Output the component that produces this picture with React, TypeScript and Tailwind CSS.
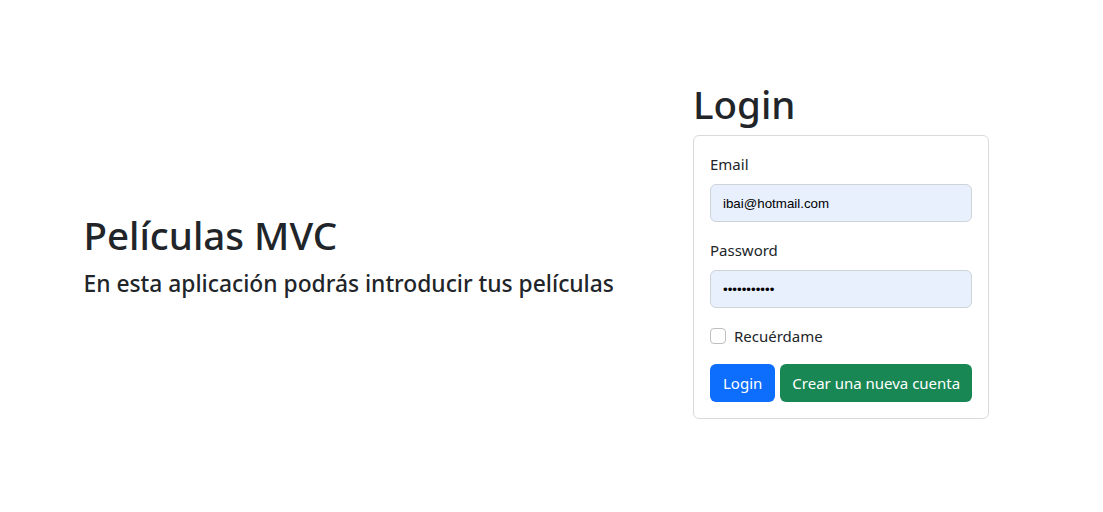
export default function App() {
  return (
    <div
      className="min-h-screen bg-white text-[#212529] pt-[81px]"
      style={{ fontFamily: '"Noto Sans", "Open Sans", sans-serif' }}
    >
      <div className="mx-auto flex w-[960px] items-center px-3">
        <div className="w-[609.5px] shrink-0 pt-[17px]">
          <h1 className="mb-[11px] text-[38.5px] font-medium leading-[1.2]">Películas MVC</h1>
          <h4 className="mb-2 text-[22.8px] font-medium leading-[1.2]">
            En esta aplicación podrás introducir tus películas
          </h4>
        </div>

        <div className="w-[296px] shrink-0">
          <h1 className="mb-2 text-[38.5px] font-medium leading-[1.2]">Login</h1>
          <form className="rounded-[6px] border border-[#dadada] p-4 text-[15px]">
            <div className="mb-4">
              <label className="mb-2 block leading-6">Email</label>
              <input
                type="text"
                readOnly
                value="ibai@hotmail.com"
                className="block h-[38px] w-full rounded-[6px] border border-[#ced4da] bg-[#e8f0fe] px-3 text-[13.33px] text-black outline-none"
                style={{ fontFamily: '"Liberation Sans", Arial, sans-serif' }}
              />
            </div>
            <div className="mb-4">
              <label className="mb-2 block leading-6">Password</label>
              <input
                type="text"
                readOnly
                value="•••••••••••"
                className="block h-[38px] w-full rounded-[6px] border border-[#ced4da] bg-[#e8f0fe] px-3 text-[13.33px] text-black outline-none"
                style={{ fontFamily: '"Liberation Sans", Arial, sans-serif' }}
              />
            </div>
            <div className="mb-4 flex items-center gap-2 leading-6">
              <span className="h-4 w-4 rounded-[4px] border border-[#bfbfbf] bg-white" />
              <span>Recuérdame</span>
            </div>
            <div className="flex gap-[5px] whitespace-nowrap">
              <button
                type="button"
                className="h-[38px] rounded-[6px] bg-[#0d6efd] px-[13px] text-white"
              >
                Login
              </button>
              <button
                type="button"
                className="h-[38px] rounded-[6px] bg-[#198754] px-3 text-white"
              >
                Crear una nueva cuenta
              </button>
            </div>
          </form>
        </div>
      </div>
    </div>
  );
}
